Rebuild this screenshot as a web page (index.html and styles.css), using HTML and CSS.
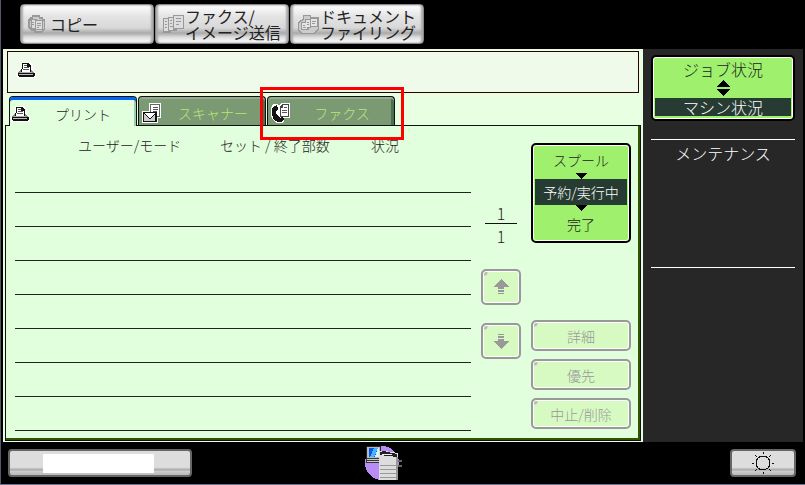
FILE: index.html
```html
<!DOCTYPE html>
<html lang="ja">
<head>
    <meta charset="UTF-8">
    <meta name="viewport" content="width=device-width, initial-scale=1.0">
    <title>ジョブ状況</title>
    <link rel="stylesheet" href="styles.css">
</head>
<body>
    <svg class="sprite" aria-hidden="true">
        <symbol id="printer" viewBox="0 0 19 16">
            <path d="M4 0h9l3 3v6l3 3v3l-1 1H1l-1-1v-4l4-3z" fill="#fff"/>
            <path d="M5 1h6l3 3v6H4V7h1z" fill="#111"/>
            <path d="M6 2h4v3h3v5H5V7h1z" fill="#fff"/>
            <path d="M7 3h3v1H7zM7 5h5v1H7zM6 7h6v1H6z" fill="#555"/>
            <path d="M3 8h1v2h10V8h1l3 4H1v-1z" fill="#888"/>
            <path d="M1 11h17v3h-1v1H2v-1H1z" fill="#111"/>
            <path d="M2 12h14v1H2z" fill="#bbb"/>
            <path d="M3 10h12v1H3z" fill="#aaa"/>
        </symbol>
    </svg>

    <header class="modes">
        <button class="mode" type="button">
            <svg class="mode-icon" viewBox="0 0 18 18">
                <path d="M4 0h8v2h3v2h2v10l-3 4H6v-2H3l-3-3V5l2-3h2z" fill="#999"/>
                <path d="M5 2h6v2h3v2h2v7l-2 3H8v-2H4l-2-2V6l3-2z" fill="#ccc"/>
                <path d="M3 4h6v10H3zM7 5h8v10H7z" fill="#999"/>
                <path d="M4 5h3v8H4zM8 6h6v8H8z" fill="#ddd"/>
                <path d="M9 8h4v1H9zM9 10h4v1H9zM9 12h2v1H9zM4 7h2v1H4zM4 9h2v1H4z" fill="#999"/>
            </svg>
            <span>コピー</span>
        </button>
        <button class="mode" type="button">
            <svg class="mode-icon mode-icon-wide" viewBox="0 0 22 20">
                <path d="M0 4h8v15H0zM5 3h9v14H5zM10 1h11v14H10z" fill="#999"/>
                <path d="M1 5h4v12H1zM6 4h4v12H6zM11 2h9v12h-9z" fill="#ddd"/>
                <path d="M13 4h5v1h-5zM13 7h5v1h-5zM13 10h3v1h-3zM7 6h2v1H7zM7 9h2v1H7zM7 12h3v1H7zM2 7h2v1H2zM2 10h2v1H2zM2 13h2v1H2z" fill="#999"/>
            </svg>
            <span>ファクス/<br>イメージ送信</span>
        </button>
        <button class="mode" type="button">
            <svg class="mode-icon mode-icon-wide" viewBox="0 0 22 20">
                <path d="M5 1h8v2h8v12l-5 5H3l-3-3V8l5-3z" fill="#999"/>
                <path d="M6 2h6v2h8v10l-4 5H4l-3-3V9l5-3z" fill="#ccc"/>
                <path d="M3 8h8v8H3zM7 5h6v9H7zM12 4h8v9h-8z" fill="#999"/>
                <path d="M4 9h5v6H4zM8 6h4v7H8zM13 5h6v7h-6z" fill="#e4e4e4"/>
                <path d="M14 7h4v1h-4zM14 9h3v1h-3zM9 8h2v1H9zM9 10h2v1H9zM5 11h2v1H5zM5 13h3v1H5z" fill="#999"/>
            </svg>
            <span>ドキュメント<br>ファイリング</span>
        </button>
    </header>

    <div class="screen">
        <main class="jobs">
            <div class="message">
                <svg class="icon"><use href="#printer"/></svg>
            </div>

            <div class="tabs" role="tablist">
                <button class="tab active" type="button" role="tab" aria-selected="true">
                    <svg class="icon"><use href="#printer"/></svg>
                    <span>プリント</span>
                </button>
                <button class="tab" type="button" role="tab" aria-selected="false">
                    <svg class="icon icon-tall" viewBox="0 0 19 20">
                        <path d="M7 0h12v15h-3v5H0V8h7z" fill="#fff"/>
                        <path d="M8 1h10v13H8z" fill="#666"/>
                        <path d="M9 2h8v11H9z" fill="#fff"/>
                        <path d="M11 4h5v1h-5zM11 6h5v1h-5zM11 8h4v1h-4z" fill="#555"/>
                        <path d="M1 9h14v10H1z" fill="#111"/>
                        <path d="M2 11l5 5h1l5-5v7H2z" fill="#ccc"/>
                        <path d="M3 10h10l-5 5H7z" fill="#fff"/>
                    </svg>
                    <span>スキャナー</span>
                </button>
                <button class="tab marked" type="button" role="tab" aria-selected="false">
                    <svg class="icon icon-tall" viewBox="0 0 19 20">
                        <path d="M2 1h4l2 2 2-3h9v15h-9v1h3v2l-2 2H6l-4-3-2-4V5z" fill="#fff"/>
                        <path d="M3 3l3-1 1 4-2 2v3l4 4 2-1 2 2-3 3H7l-4-2-2-5V6z" fill="#111"/>
                        <path d="M11 1h7v13H9V4z" fill="#444"/>
                        <path d="M12 2h5v11h-7V5h2z" fill="#fff"/>
                        <path d="M13 4h3v1h-3zM11 7h5v1h-5zM11 9h5v1h-5z" fill="#555"/>
                    </svg>
                    <span>ファクス</span>
                </button>
            </div>

            <section class="panel">
                <table class="list">
                    <thead>
                        <tr><th class="col-user">ユーザー/モード</th><th class="col-set">セット / 終了部数</th><th>状況</th></tr>
                    </thead>
                    <tbody>
                        <tr><td colspan="3"></td></tr>
                        <tr><td colspan="3"></td></tr>
                        <tr><td colspan="3"></td></tr>
                        <tr><td colspan="3"></td></tr>
                        <tr><td colspan="3"></td></tr>
                        <tr><td colspan="3"></td></tr>
                        <tr><td colspan="3"></td></tr>
                        <tr><td colspan="3"></td></tr>
                    </tbody>
                </table>

                <div class="pager">
                    <div class="pages">
                        <span class="page">1</span>
                        <span class="total">1</span>
                    </div>
                    <button class="key off" type="button" aria-label="前のページ" disabled>
                        <svg class="arrow" viewBox="0 0 16 16" fill="#999"><path d="M8 0l8 8h-5v2H5V8H0zM5 11h6v2H5zM5 14h6v1H5z"/></svg>
                    </button>
                    <button class="key off" type="button" aria-label="次のページ" disabled>
                        <svg class="arrow" viewBox="0 0 16 16" fill="#999"><path d="M8 16l8-8h-5V6H5v2H0zM5 3h6v2H5zM5 1h6v1H5z"/></svg>
                    </button>
                </div>

                <div class="actions">
                    <button class="key queue" type="button">
                        <span>スプール</span>
                        <svg class="down" viewBox="0 0 12 6"><path d="M0 0h12L6 6z"/></svg>
                        <span class="selected">予約/実行中</span>
                        <svg class="down" viewBox="0 0 12 6"><path d="M0 0h12L6 6z"/></svg>
                        <span>完了</span>
                    </button>
                    <div class="commands">
                        <button class="key off" type="button" disabled>詳細</button>
                        <button class="key off" type="button" disabled>優先</button>
                        <button class="key off" type="button" disabled>中止/削除</button>
                    </div>
                </div>
            </section>
        </main>

        <aside class="side">
            <button class="key status" type="button">
                <span>ジョブ状況</span>
                <svg class="updown" viewBox="0 0 14 16"><path d="M7 0l7 7H0zM0 9h14l-7 7z"/></svg>
                <span class="selected">マシン状況</span>
            </button>
            <div class="maintenance">メンテナンス</div>
        </aside>
    </div>

    <footer class="bar">
        <button class="bar-button notice" type="button" aria-label="通知"><span class="blank"></span></button>
        <svg class="machine" viewBox="0 0 38 36">
            <circle cx="17" cy="18" r="17" fill="#b98cf5"/>
            <path d="M1 1h15v13H1z" fill="#222"/>
            <path d="M2 2h13v11H2z" fill="#bbb"/>
            <path d="M4 3h10v9H4z" fill="#0756e8"/>
            <path d="M9 3h4l-4 9H5z" fill="#42b7ff"/>
            <path d="M13 3h1v9h-4z" fill="#d8f0ff"/>
            <path d="M1 13h14v5H1z" fill="#333"/>
            <path d="M2 14h12v1H2zM2 16h12v1H2z" fill="#ccc"/>
            <path d="M14 6h6l13 2v27H14z" fill="#ddd"/>
            <path d="M15 7l4-1 13 3v3l-17-2z" fill="#222"/>
            <path d="M17 9h10v1H17z" fill="#eee"/>
            <path d="M15 20h16v1H15zM15 24h16v1H15zM15 28h16v1H15zM15 32h16v1H15z" fill="#999"/>
            <path d="M31 12h2v23h-2z" fill="#999"/>
            <path d="M33 15h4v2h-4zM33 20h4v2h-4z" fill="#666"/>
        </svg>
        <button class="bar-button light" type="button" aria-label="明るさ">
            <svg class="sun" viewBox="0 0 22 22" fill="none" stroke="#111">
                <circle cx="11" cy="11" r="7"/>
                <path d="M11 0v2M11 20v2M0 11h2M20 11h2M3 3l2 2M17 17l2 2M19 3l-2 2M5 17l-2 2"/>
            </svg>
        </button>
    </footer>
</body>
</html>
```

FILE: styles.css
```css
* {
    margin: 0;
    padding: 0;
    box-sizing: border-box;
}

body {
    min-height: 100vh;
    display: flex;
    flex-direction: column;
    background-color: #000;
    border-left: 1px solid #555868;
    border-bottom: 1px solid #68758c;
    color: #222;
    font-family: "Noto Sans CJK JP", sans-serif;
    font-size: 16px;
    font-weight: 300;
    line-height: 16px;
}

button {
    font: inherit;
    color: inherit;
    border: none;
    cursor: pointer;
}

svg {
    display: block;
    flex: none;
    shape-rendering: crispEdges;
}

.sprite {
    position: absolute;
    width: 0;
    height: 0;
}

/* mode buttons */
.modes {
    display: flex;
    gap: 1px;
    padding: 4px 19px 5px;
}

.mode {
    display: flex;
    align-items: center;
    gap: 4px;
    width: 134px;
    height: 40px;
    padding-left: 7px;
    border: 1px solid #888;
    border-radius: 4px;
    background: linear-gradient(#fff 0, #e4e4e4 30%, #d8d8d8 60%, #aaa 74%, #ddd 85%, #fff 100%);
    box-shadow: inset 2px 0 2px #aaa, inset -2px 0 2px #aaa;
    font-weight: 400;
    text-align: left;
    white-space: nowrap;
}

.mode-icon {
    width: 18px;
    height: 18px;
}

.mode-icon-wide {
    width: 22px;
    height: 20px;
    margin-right: -4px;
}

.screen {
    flex: 1;
    display: flex;
    padding: 0 2px;
}

/* job list */
.jobs {
    flex: 1;
    display: flex;
    flex-direction: column;
    padding: 2px 2px 1px;
    background-color: #e8ffe2;
}

.message {
    height: 42px;
    margin: 0 2px;
    padding: 10px 9px;
    border: 1px solid #2a0000;
    background-color: #effaea;
}

.icon {
    width: 19px;
    height: 16px;
}

.icon-tall {
    height: 20px;
}

.tabs {
    display: flex;
    gap: 1px;
    margin: 3px 4px 0;
}

.tab {
    position: relative;
    display: flex;
    align-items: center;
    width: 128px;
    height: 29px;
    padding: 4px 0 0 3px;
    border: 1px solid #111;
    border-bottom: none;
    border-radius: 4px 4px 0 0;
    background-color: #7b9973;
    box-shadow: inset 0 2px #92ad8e, inset -3px 0 #477252;
    color: #b6e878;
    font-size: 14px;
}

.tab span {
    flex: 1;
    text-align: center;
}

.tab.active {
    height: 30px;
    margin-bottom: -1px;
    padding-left: 1px;
    background-color: #e2ffdd;
    box-shadow: inset 0 3px #0067f5, inset -2px 0 #9ccdb0;
    color: #222;
    z-index: 1;
}

.marked::after {
    content: "";
    position: absolute;
    inset: -10px -10px -15px -8px;
    border: 3px solid #f00;
    pointer-events: none;
}

.panel {
    flex: 1;
    display: flex;
    gap: 10px;
    padding: 0 9px 9px;
    border: 1px solid #111;
    background-color: #e2ffdd;
    box-shadow: inset -2px -2px #335500;
    font-size: 14px;
}

.list {
    flex: 1;
    align-self: flex-start;
    border-collapse: collapse;
    table-layout: fixed;
}

.list th {
    height: 32px;
    padding-top: 6px;
    font-weight: 300;
    text-align: left;
    white-space: nowrap;
}

.list .col-user {
    width: 205px;
    padding-left: 63px;
}

.list .col-set {
    width: 151px;
}

.list td {
    height: 34px;
    border-bottom: 1px solid #222;
}

.key {
    border: 2px solid #000;
    border-radius: 5px;
    background-color: #9ff06c;
    box-shadow: inset 0 0 0 1px #fff;
}

.key.off {
    border-color: #999;
    background-color: #d7fac2;
    background-image: radial-gradient(circle at 2px 2px, #bbb 2px, transparent 3px);
    color: #999;
    cursor: default;
}

.pager {
    display: flex;
    flex-direction: column;
    gap: 18px;
    width: 40px;
    padding-top: 77px;
}

.pager .key {
    height: 36px;
}

.pages {
    display: flex;
    flex-direction: column;
    margin: 0 4px 5px;
    font-size: 16px;
    line-height: 20px;
    text-align: center;
}

.page {
    border-bottom: 1px solid #111;
}

.total {
    padding-top: 2px;
}

.arrow {
    width: 16px;
    height: 16px;
    margin: 0 auto;
}

.actions {
    display: flex;
    flex-direction: column;
    justify-content: space-between;
    width: 100px;
    padding: 17px 0 2px;
}

.queue {
    display: flex;
    flex-direction: column;
    align-items: stretch;
    height: 100px;
    padding: 2px;
    line-height: 26px;
}

.down {
    width: 12px;
    height: 6px;
    margin: 0 auto;
}

.selected {
    background-color: #263b31;
    color: #fff;
}

.commands {
    display: flex;
    flex-direction: column;
    gap: 8px;
}

.commands .key {
    height: 31px;
}

/* side column */
.side {
    width: 160px;
    padding: 6px 8px;
    background-color: #272727;
}

.status {
    display: flex;
    flex-direction: column;
    gap: 2px;
    width: 100%;
    padding: 3px 2px;
    line-height: 18px;
}

.updown {
    width: 14px;
    height: 16px;
    margin: 0 auto;
}

.maintenance {
    height: 129px;
    margin-top: 18px;
    padding-top: 5px;
    border-top: 1px solid #fff;
    border-bottom: 1px solid #fff;
    color: #fff;
    text-align: center;
}

/* bottom bar */
.bar {
    display: grid;
    grid-template-columns: 10fr 38px 11fr;
    align-items: center;
    height: 42px;
    padding: 0 9px 0 7px;
}

.bar-button {
    height: 28px;
    border: 2px solid #666;
    border-radius: 4px;
    background: linear-gradient(#ddd 0, #ddd 68%, #aaa 78%, #ccc 85%, #bbb 100%);
}

.notice {
    width: 184px;
    padding-left: 33px;
}

.blank {
    display: block;
    width: 111px;
    height: 19px;
    background-color: #fff;
}

.machine {
    width: 38px;
    height: 36px;
}

.light {
    justify-self: end;
    width: 66px;
}

.sun {
    width: 22px;
    height: 22px;
    margin: 0 auto;
}
```
